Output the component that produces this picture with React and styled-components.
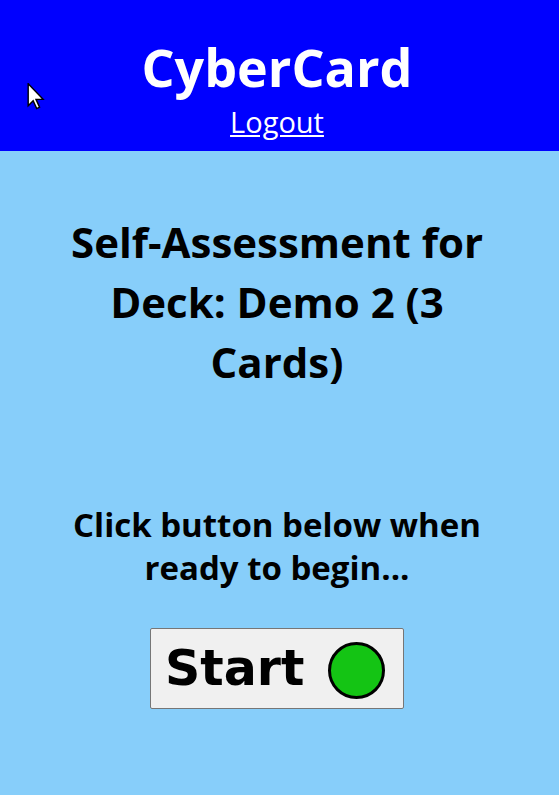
import React from "react";
import styled, { createGlobalStyle } from "styled-components";

const Global = createGlobalStyle`
  html, body { margin: 0; padding: 0; }
  body {
    background: #87cefa;
    font-family: "Open Sans", "Noto Sans", sans-serif;
    color: #000;
  }
`;

const Page = styled.div`
  position: relative;
  min-height: 795px;
  background: #87cefa;
`;

const Header = styled.header`
  background: #0000ff;
  color: #fff;
  height: 151px;
  box-sizing: border-box;
  padding: 34px 5px 0 0;
  display: flex;
  flex-direction: column;
  align-items: center;
`;

const Title = styled.h1`
  margin: 0;
  font-size: 52px;
  line-height: 65px;
  font-weight: 700;
`;

const LogoutLink = styled.a`
  margin-top: 5px;
  font-size: 29px;
  line-height: 36px;
  color: #fff;
  text-decoration: underline;
  cursor: pointer;
`;

const Main = styled.main`
  display: flex;
  flex-direction: column;
  align-items: center;
  padding: 61px 45px 40px 40px;
  text-align: center;
`;

const Heading = styled.h2`
  margin: 0;
  font-size: 42px;
  line-height: 60px;
  font-weight: 700;
  max-width: 460px;
`;

const Prompt = styled.p`
  margin: 111px 0 0;
  font-size: 33px;
  line-height: 43px;
  font-weight: 700;
  max-width: 450px;
`;

const StartButton = styled.button`
  margin-top: 39px;
  width: 254px;
  height: 81px;
  box-sizing: border-box;
  background: #f0f0f0;
  border: 1px solid #767676;
  border-radius: 2px;
  display: flex;
  align-items: center;
  padding: 0 0 0 14px;
  gap: 24px;
  cursor: pointer;
`;

const StartLabel = styled.span`
  font-family: "DejaVu Sans", Verdana, sans-serif;
  font-weight: 700;
  font-size: 49px;
  line-height: 1;
  color: #000;
`;

const Lamp = styled.span`
  width: 57px;
  height: 57px;
  margin-top: 4px;
  box-sizing: border-box;
  border-radius: 50%;
  background: #14c414;
  border: 3px solid #000;
`;

const Cursor = styled.svg`
  position: absolute;
  left: 27px;
  top: 83px;
  width: 18px;
  height: 27px;
`;

export default function App() {
  return (
    <Page>
      <Global />
      <Header>
        <Title>CyberCard</Title>
        <LogoutLink>Logout</LogoutLink>
      </Header>
      <Main>
        <Heading>Self-Assessment for Deck: Demo 2 (3 Cards)</Heading>
        <Prompt>Click button below when ready to begin...</Prompt>
        <StartButton>
          <StartLabel>Start</StartLabel>
          <Lamp />
        </StartButton>
      </Main>
      <Cursor viewBox="0 0 12 19">
        <path d="M0.5 0.5 L0.5 16 L4 12.5 L6.5 18 L8.5 17 L6 11.5 L11 11.5 Z" fill="#fff" stroke="#000" strokeWidth="1" strokeLinejoin="miter" />
      </Cursor>
    </Page>
  );
}
